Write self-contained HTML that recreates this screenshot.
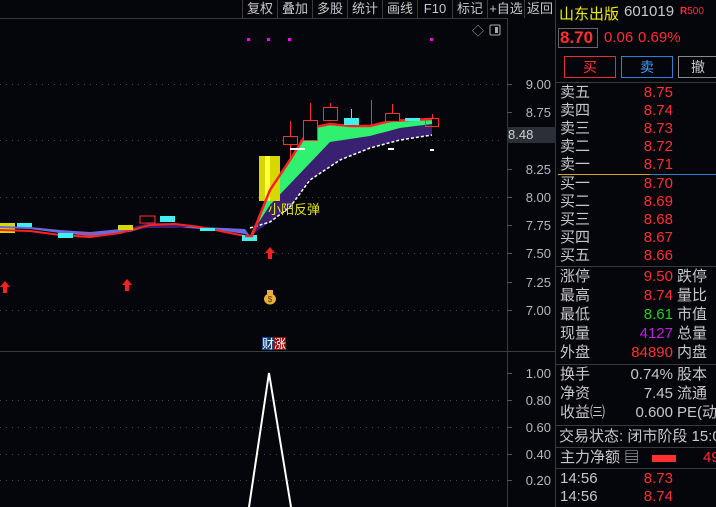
<!DOCTYPE html>
<html><head><meta charset="utf-8"><style>
*{margin:0;padding:0;box-sizing:border-box}
body{width:716px;height:507px;background:#05050c;overflow:hidden;position:relative;font-family:"Liberation Sans","Noto Sans CJK SC",sans-serif;color:#c8c8c8}
.a{position:absolute;white-space:nowrap}
.tb{position:absolute;top:0;height:18px;font-size:13px;line-height:17px;color:#c8c8c8;text-align:center;border-left:1px solid #3a3a3a}
.r{color:#ff3030}.g{color:#1ed21e}.p{color:#c020e0}.y{color:#f0f000}
.row{position:absolute;left:556px;width:160px;height:18px;font-size:15px;line-height:18px;white-space:nowrap;overflow:hidden}
.row span{white-space:nowrap}
.row .l{position:absolute;left:4px;color:#c8c8c8}
.row .v{position:absolute;right:43px;text-align:right}
.row .l2{position:absolute;left:121px;color:#c8c8c8}
.hl{position:absolute;left:556px;width:160px;height:1px;background:#3a3a3a}
</style></head><body>
<div class="tb" style="left:242px;width:35px">复权</div>
<div class="tb" style="left:277px;width:35px">叠加</div>
<div class="tb" style="left:312px;width:35px">多股</div>
<div class="tb" style="left:347px;width:35px">统计</div>
<div class="tb" style="left:382px;width:35px">画线</div>
<div class="tb" style="left:417px;width:35px">F10</div>
<div class="tb" style="left:452px;width:35px">标记</div>
<div class="tb" style="left:487px;width:37px">+自选</div>
<div class="tb" style="left:524px;width:32px;border-right:1px solid #3a3a3a">返回</div>
<div class="a" style="left:0;top:18px;width:507px;height:1px;background:#3a3a3a"></div>

<svg class="a" style="left:0;top:0" width="556" height="507">
<g stroke="#444" stroke-dasharray="1 5" stroke-width="1">
<line x1="0" y1="84.5" x2="500" y2="84.5"/><line x1="0" y1="140.5" x2="500" y2="140.5"/><line x1="0" y1="197.5" x2="500" y2="197.5"/><line x1="0" y1="253.5" x2="500" y2="253.5"/><line x1="0" y1="310.5" x2="500" y2="310.5"/>
<line x1="0" y1="400.5" x2="500" y2="400.5"/><line x1="0" y1="427.5" x2="500" y2="427.5"/><line x1="0" y1="454.5" x2="500" y2="454.5"/><line x1="0" y1="480.5" x2="500" y2="480.5"/>
</g>
<line x1="507.5" y1="18" x2="507.5" y2="507" stroke="#3a3a3a"/>
<line x1="555.5" y1="0" x2="555.5" y2="507" stroke="#3a3a3a"/>
<line x1="0" y1="351.5" x2="556" y2="351.5" stroke="#3a3a3a"/>
<g stroke="#555"><line x1="507" y1="84.5" x2="512" y2="84.5"/><line x1="507" y1="112.5" x2="512" y2="112.5"/><line x1="507" y1="169.5" x2="512" y2="169.5"/><line x1="507" y1="197.5" x2="512" y2="197.5"/><line x1="507" y1="225.5" x2="512" y2="225.5"/><line x1="507" y1="253.5" x2="512" y2="253.5"/><line x1="507" y1="282.5" x2="512" y2="282.5"/><line x1="507" y1="310.5" x2="512" y2="310.5"/>
<line x1="507" y1="373.5" x2="512" y2="373.5"/><line x1="507" y1="400.5" x2="512" y2="400.5"/><line x1="507" y1="427.5" x2="512" y2="427.5"/><line x1="507" y1="454.5" x2="512" y2="454.5"/><line x1="507" y1="480.5" x2="512" y2="480.5"/></g>
<g fill="#b8b8b8" font-size="13" text-anchor="end" font-family="Liberation Sans">
<text x="551" y="89">9.00</text><text x="551" y="117">8.75</text><text x="551" y="174">8.25</text><text x="551" y="202">8.00</text><text x="551" y="230">7.75</text><text x="551" y="258">7.50</text><text x="551" y="287">7.25</text><text x="551" y="315">7.00</text>
<text x="551" y="378">1.00</text><text x="551" y="405">0.80</text><text x="551" y="432">0.60</text><text x="551" y="459">0.40</text><text x="551" y="485">0.20</text></g>
<rect x="507" y="127" width="49" height="16" fill="#2c2f36"/>
<text x="508" y="139" fill="#d0d0d0" font-size="13" font-family="Liberation Sans">8.48</text>
<g fill="#ff00ff"><rect x="247" y="38" width="3" height="3"/><rect x="267" y="38" width="3" height="3"/><rect x="288" y="38" width="3" height="3"/><rect x="430" y="38" width="3" height="3"/></g>
<text x="472" y="35" fill="#aaa" font-size="12">◇</text>
<rect x="490" y="25" width="10" height="10" fill="none" stroke="#aaa" rx="1"/><rect x="495" y="27" width="3" height="6" fill="#aaa"/>
<rect x="0" y="223" width="15" height="10" fill="#d8d800"/>
<rect x="17" y="223" width="15" height="4" fill="#40f0f0"/>
<polygon points="0,228 30,229 60,233 90,236 130,232 150,226 175,227 200,229 225,231 245,234 250,236 245,229 225,228 200,227 175,225 150,223 130,228 90,232 60,230 30,227 0,226" fill="#6a6ae0"/>
<polygon points="120,230 150,223 175,223 200,226 175,228 150,228" fill="#3a2070"/>
<polyline points="0,230 30,231 60,235 90,237 120,233 150,225 175,224 200,227 225,232 245,236 250,236" fill="none" stroke="#ff2020" stroke-width="2"/>
<rect x="58" y="233" width="15" height="5" fill="#40f0f0"/>
<rect x="78" y="234" width="15" height="3" fill="none" stroke="#ff3030"/>
<rect x="118" y="225" width="15" height="5" fill="#d8d800"/>
<rect x="140" y="216" width="15" height="7" fill="none" stroke="#ff3030"/>
<rect x="160" y="216" width="15" height="6" fill="#40f0f0"/>
<rect x="200" y="228" width="15" height="3" fill="#40f0f0"/>
<rect x="242" y="235" width="15" height="6" fill="#40f0f0"/>
<polygon points="250,236 270,222 290,207 310,180 340,160 370,148 400,140 432,135 432,124 400,128 370,136 330,142 270,205 250,236" fill="#3a2070"/>
<polygon points="250,236 270,205 330,142 370,136 400,128 432,124 432,120 410,120 390,121 370,126 350,126 330,124 310,128 290,160 270,190" fill="#30f070"/>
<polyline points="250,228 270,222 290,207 310,180 340,160 370,148 400,140 432,135" fill="none" stroke="#fff" stroke-width="1.5" stroke-dasharray="3 2"/>
<rect x="259" y="156" width="21" height="45" fill="#d8d800"/>
<rect x="265" y="156" width="5" height="45" fill="#ffff40"/>
<polyline points="245,236 252,236 260,215 270,190 290,160 310,128 330,124 350,126 370,126 390,121 410,120 432,119" fill="none" stroke="#ff2020" stroke-width="2.5"/>
<g stroke="#ff3030" fill="none">
<line x1="290.5" y1="121" x2="290.5" y2="160"/><rect x="283.5" y="136.5" width="14" height="8" fill="#05050c"/>
<line x1="310.5" y1="103" x2="310.5" y2="140"/><rect x="303.5" y="120.5" width="14" height="20" fill="#05050c"/>
<line x1="330.5" y1="103" x2="330.5" y2="120"/><rect x="323.5" y="107.5" width="14" height="13" fill="#05050c"/>
<line x1="371.5" y1="100" x2="371.5" y2="125"/>
<line x1="392.5" y1="104" x2="392.5" y2="115"/><rect x="385.5" y="113.5" width="14" height="8" fill="#05050c"/>
<line x1="432.5" y1="114" x2="432.5" y2="119"/><rect x="425.5" y="118.5" width="13" height="8"/>
</g>
<line x1="351.5" y1="109" x2="351.5" y2="118" stroke="#40f0f0"/>
<rect x="344" y="118" width="15" height="7" fill="#40f0f0"/>
<rect x="405" y="118" width="15" height="3" fill="#40f0f0"/>
<rect x="290" y="148" width="15" height="2" fill="#fff"/>
<rect x="388" y="148" width="6" height="2" fill="#fff"/>
<rect x="430" y="149" width="4" height="2" fill="#fff"/>
<text x="268" y="214" fill="#e8e800" font-size="13" font-family="Noto Sans CJK SC">小阳反弹</text>
<g fill="#ff2020">
<polygon points="5,281 0,287 3,287 3,293 7,293 7,287 10,287"/>
<polygon points="127,279 122,285 125,285 125,291 129,291 129,285 132,285"/>
<polygon points="270,247 265,253 268,253 268,259 272,259 272,253 275,253"/>
</g>
<ellipse cx="270" cy="299" rx="6" ry="5.5" fill="#e8b040"/><rect x="267" y="290" width="6" height="4" fill="#e8b040"/>
<text x="270" y="302" font-size="8" fill="#604000" text-anchor="middle">$</text>
<rect x="262" y="337" width="12" height="13" fill="#10407a"/><rect x="274" y="337" width="12" height="13" fill="#901010"/>
<text x="262" y="348" font-size="12" fill="#fff" font-family="Noto Sans CJK SC">财涨</text>
<polyline points="249,507 269,373 291,507" fill="none" stroke="#fff" stroke-width="2"/>
</svg>

<div class="a y" style="left:559px;top:3px;font-size:15px">山东出版</div>
<div class="a" style="left:624px;top:3px;font-size:15px;color:#c8c8c8">601019</div>
<div class="a r" style="left:680px;top:6px;font-size:10px;font-weight:bold">R<span style="font-weight:normal">500</span></div>
<div class="a r" style="left:558px;top:28px;width:40px;height:20px;border:1px solid #666;font-size:17px;font-weight:bold;line-height:18px;padding-left:1px">8.70</div>
<div class="a r" style="left:604px;top:29px;font-size:15px">0.06</div>
<div class="a r" style="left:638px;top:29px;font-size:15px">0.69%</div>
<div class="a r" style="left:564px;top:56px;width:52px;height:22px;border:1px solid #e03030;text-align:center;font-size:14px;line-height:20px">买</div>
<div class="a" style="left:621px;top:56px;width:52px;height:22px;border:1px solid #3080d0;color:#40a0ff;text-align:center;font-size:14px;line-height:20px">卖</div>
<div class="a" style="left:678px;top:56px;width:40px;height:22px;border:1px solid #888;text-align:center;font-size:14px;line-height:20px">撤</div>
<div class="hl" style="top:82px"></div>
<div class="row" style="top:84px"><span class="l">卖五</span><span class="v r">8.75</span></div>
<div class="row" style="top:102px"><span class="l">卖四</span><span class="v r">8.74</span></div>
<div class="row" style="top:120px"><span class="l">卖三</span><span class="v r">8.73</span></div>
<div class="row" style="top:138px"><span class="l">卖二</span><span class="v r">8.72</span></div>
<div class="row" style="top:156px"><span class="l">卖一</span><span class="v r">8.71</span></div>
<div class="a" style="left:558px;top:174px;width:92px;height:1px;background:#e0a020"></div>
<div class="a" style="left:650px;top:174px;width:66px;height:1px;background:#3080d0"></div>
<div class="row" style="top:175px"><span class="l">买一</span><span class="v r">8.70</span></div>
<div class="row" style="top:193px"><span class="l">买二</span><span class="v r">8.69</span></div>
<div class="row" style="top:211px"><span class="l">买三</span><span class="v r">8.68</span></div>
<div class="row" style="top:229px"><span class="l">买四</span><span class="v r">8.67</span></div>
<div class="row" style="top:247px"><span class="l">买五</span><span class="v r">8.66</span></div>
<div class="hl" style="top:266px"></div>
<div class="row" style="top:268px"><span class="l">涨停</span><span class="v r">9.50</span><span class="l2">跌停</span></div>
<div class="row" style="top:287px"><span class="l">最高</span><span class="v r">8.74</span><span class="l2">量比</span></div>
<div class="row" style="top:306px"><span class="l">最低</span><span class="v g">8.61</span><span class="l2">市值</span></div>
<div class="row" style="top:325px"><span class="l">现量</span><span class="v p">4127</span><span class="l2">总量</span></div>
<div class="row" style="top:344px"><span class="l">外盘</span><span class="v r">84890</span><span class="l2">内盘</span></div>
<div class="hl" style="top:364px"></div>
<div class="row" style="top:366px"><span class="l">换手</span><span class="v">0.74%</span><span class="l2">股本</span></div>
<div class="row" style="top:385px"><span class="l">净资</span><span class="v">7.45</span><span class="l2">流通</span></div>
<div class="row" style="top:404px"><span class="l">收益㈢</span><span class="v">0.600</span><span class="l2">PE(动)</span></div>
<div class="hl" style="top:425px"></div>
<div class="row" style="top:428px"><span class="l" style="left:3px">交易状态: 闭市阶段 15:00</span></div>
<div class="hl" style="top:447px"></div>
<div class="row" style="top:449px"><span class="l">主力净额 ▤</span></div>
<div class="a" style="left:652px;top:455px;width:24px;height:7px;background:#ff3030"></div>
<div class="a r" style="left:703px;top:449px;font-size:15px">49</div>
<div class="hl" style="top:468px"></div>
<div class="row" style="top:470px"><span class="l">14:56</span><span class="v r">8.73</span></div>
<div class="row" style="top:488px"><span class="l">14:56</span><span class="v r">8.74</span></div>
</body></html>
